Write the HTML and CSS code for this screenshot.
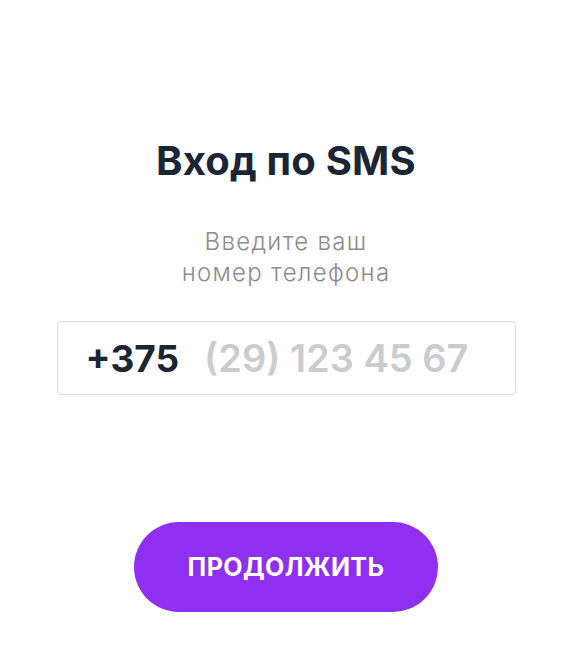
FILE: index.html
```html
<!DOCTYPE html>
<html lang="ru">
<head>
<meta charset="utf-8">
<link rel="stylesheet" href="styles.css">
</head>
<body>
<main class="screen">
  <h1 class="title">Вход по SMS</h1>
  <p class="subtitle">Введите ваш<br>номер телефона</p>
  <div class="phone">
    <span class="code">+375</span>
    <span class="placeholder">(29) 123 45 67</span>
  </div>
  <button class="btn" type="button">ПРОДОЛЖИТЬ</button>
</main>
</body>
</html>
```
FILE: styles.css
```css
html, body {
  margin: 0;
  padding: 0;
  background: #ffffff;
}
body {
  font-family: Inter, "Noto Sans", sans-serif;
}
.screen {
  width: 572px;
  display: flex;
  flex-direction: column;
  align-items: center;
  padding-top: 138px;
}
.title {
  margin: 0;
  font-size: 40px;
  line-height: 46px;
  font-weight: 700;
  color: #1b2533;
  letter-spacing: 0.2px;
}
.subtitle {
  margin: 42px 0 0;
  font-size: 24px;
  line-height: 31px;
  font-weight: 300;
  color: #8c8c8c;
  text-align: center;
  letter-spacing: 1.3px;
}
.phone {
  margin-top: 33px;
  box-sizing: border-box;
  width: 459px;
  height: 74px;
  border: 1px solid #dcdcdc;
  border-radius: 4px;
  display: flex;
  align-items: center;
  gap: 25px;
  padding-left: 28px;
  font-size: 38px;
  font-weight: 700;
}
.code {
  color: #1b2533;
  font-size: 37px;
}
.placeholder {
  color: #cbccce;
  font-weight: 600;
}
.btn {
  margin-top: 127px;
  width: 304px;
  height: 90px;
  border: none;
  border-radius: 45px;
  background: #8f2ff0;
  color: #ffffff;
  font-family: inherit;
  font-size: 25px;
  font-weight: 700;
  letter-spacing: 0.4px;
}
```
